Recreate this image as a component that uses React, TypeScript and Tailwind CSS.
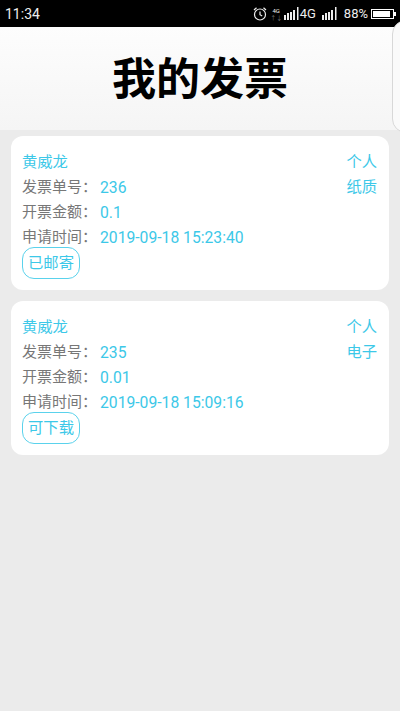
import * as React from "react";

const FONT = "font-['Roboto','Noto_Sans_CJK_SC',sans-serif]";

interface Invoice {
  name: string;
  no: string;
  amount: string;
  time: string;
  type: string;
  media: string;
  status: string;
}

const invoices: Invoice[] = [
  { name: "黄威龙", no: "236", amount: "0.1", time: "2019-09-18 15:23:40", type: "个人", media: "纸质", status: "已邮寄" },
  { name: "黄威龙", no: "235", amount: "0.01", time: "2019-09-18 15:09:16", type: "个人", media: "电子", status: "可下载" },
];

function Signal() {
  return (
    <svg width="15" height="13" viewBox="0 0 15 13" className="block">
      <rect x="0" y="8" width="2" height="5" fill="#eee" />
      <rect x="3" y="6" width="2" height="7" fill="#eee" />
      <rect x="6" y="5" width="2" height="8" fill="#eee" />
      <rect x="9" y="3" width="2" height="10" fill="#eee" />
      <rect x="13" y="0" width="1.5" height="13" fill="#eee" />
    </svg>
  );
}

function StatusBar() {
  return (
    <div className="flex h-[27px] items-center justify-between bg-black pl-[5px] pr-[4px] text-[#eee]">
      <span className="text-[14px] leading-none">11:34</span>
      <div className="flex items-center">
        <svg width="16" height="16" viewBox="0 0 16 16" fill="none" stroke="#eee" strokeWidth="1.2" className="mr-[4px]">
          <circle cx="8" cy="8.5" r="5.5" />
          <path d="M8 5.5V8.7L10.2 10M2 4l2.5-2.3M14 4l-2.5-2.3" />
        </svg>
        <div className="mr-[3px] flex w-[9px] flex-col items-center text-[6px] leading-[7px]">
          <span>4G</span>
          <span className="text-[#777]">↑↓</span>
        </div>
        <Signal />
        <span className="ml-[1px] text-[13px] leading-none">4G</span>
        <span className="ml-[6px]">
          <Signal />
        </span>
        <span className="ml-[7px] text-[13px] leading-none">88%</span>
        <div className="ml-[3px] flex items-center">
          <div className="h-[10px] w-[23px] border border-white p-[1px]">
            <div className="h-full w-[88%] bg-white" />
          </div>
          <div className="h-[4px] w-[2px] bg-white" />
        </div>
      </div>
    </div>
  );
}

function Row({ label, value }: { label: string; value: string }) {
  return (
    <div className="flex h-[25px] items-center whitespace-nowrap">
      <span className="w-[78px] shrink-0 text-[15px] text-[#777]">{label}</span>
      <span className="text-[15.7px] text-[#3cc8e8]">{value}</span>
    </div>
  );
}

function InvoiceCard({ item }: { item: Invoice }) {
  return (
    <div className="mx-[11px] flex h-[154px] justify-between rounded-[12px] bg-white pl-[11px] pr-[12px] pt-[14px]">
      <div>
        <div className="flex h-[25px] items-center whitespace-nowrap text-[15.3px] text-[#3cc8e8]">{item.name}</div>
        <Row label="发票单号：" value={item.no} />
        <Row label="开票金额：" value={item.amount} />
        <Row label="申请时间：" value={item.time} />
        <div className="-mt-[3px] flex h-[32px] w-[58px] items-center justify-center whitespace-nowrap rounded-[12px] border border-[#5ad2ec] text-[15.3px] text-[#3cc8e8]">
          {item.status}
        </div>
      </div>
      <div className="whitespace-nowrap text-[15.3px] text-[#3cc8e8]">
        <div className="flex h-[25px] items-center">{item.type}</div>
        <div className="flex h-[25px] items-center">{item.media}</div>
      </div>
    </div>
  );
}

export default function App() {
  return (
    <div className={`${FONT} relative h-[711px] w-[400px] overflow-hidden bg-[#ebebeb]`}>
      <StatusBar />
      <div className="flex h-[103px] items-center justify-center bg-gradient-to-b from-[#fdfdfd] to-[#f5f5f5] pt-[3px] text-[44px] font-bold text-black">
        我的发票
      </div>
      {/* floating side handle */}
      <div className="absolute left-[392px] top-[20px] h-[113px] w-[40px] rounded-[14px] border border-[#d8d8d8] bg-[#fafafa]" />
      <div className="flex flex-col gap-[11px] pt-[6px]">
        {invoices.map((item) => (
          <InvoiceCard key={item.no} item={item} />
        ))}
      </div>
    </div>
  );
}
